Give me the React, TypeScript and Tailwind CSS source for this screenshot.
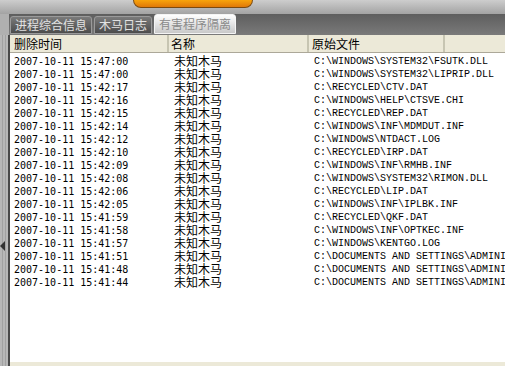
import React from "react";

const rows: [string, string][] = [
  ["2007-10-11 15:47:00", "C:\\WINDOWS\\SYSTEM32\\FSUTK.DLL"],
  ["2007-10-11 15:47:00", "C:\\WINDOWS\\SYSTEM32\\LIPRIP.DLL"],
  ["2007-10-11 15:42:17", "C:\\RECYCLED\\CTV.DAT"],
  ["2007-10-11 15:42:16", "C:\\WINDOWS\\HELP\\CTSVE.CHI"],
  ["2007-10-11 15:42:15", "C:\\RECYCLED\\REP.DAT"],
  ["2007-10-11 15:42:14", "C:\\WINDOWS\\INF\\MDMDUT.INF"],
  ["2007-10-11 15:42:12", "C:\\WINDOWS\\NTDACT.LOG"],
  ["2007-10-11 15:42:10", "C:\\RECYCLED\\IRP.DAT"],
  ["2007-10-11 15:42:09", "C:\\WINDOWS\\INF\\RMHB.INF"],
  ["2007-10-11 15:42:08", "C:\\WINDOWS\\SYSTEM32\\RIMON.DLL"],
  ["2007-10-11 15:42:06", "C:\\RECYCLED\\LIP.DAT"],
  ["2007-10-11 15:42:05", "C:\\WINDOWS\\INF\\IPLBK.INF"],
  ["2007-10-11 15:41:59", "C:\\RECYCLED\\QKF.DAT"],
  ["2007-10-11 15:41:58", "C:\\WINDOWS\\INF\\OPTKEC.INF"],
  ["2007-10-11 15:41:57", "C:\\WINDOWS\\KENTGO.LOG"],
  ["2007-10-11 15:41:51", "C:\\DOCUMENTS AND SETTINGS\\ADMINI"],
  ["2007-10-11 15:41:48", "C:\\DOCUMENTS AND SETTINGS\\ADMINI"],
  ["2007-10-11 15:41:44", "C:\\DOCUMENTS AND SETTINGS\\ADMINI"],
];

const cjk = "[font-family:'Noto_Sans_CJK_SC',sans-serif]";
const mono = "[font-family:'Liberation_Mono',monospace]";
const dateFont = "[font-family:'DejaVu_Sans_Mono',monospace]";

function Tab({ label, active }: { label: string; active?: boolean }) {
  if (active) {
    return (
      <div className={`h-[20px] mt-[-1px] px-[4px] rounded-t-[3px] border border-[#f4f4f4] bg-gradient-to-b from-[#ffffff] to-[#c9c9c9] text-[#8a8a8a] text-[12px] leading-[18px] ${cjk}`}>
        {label}
      </div>
    );
  }
  return (
    <div className={`h-[18px] mt-[1px] px-[4px] rounded-t-[3px] border border-[#9a9a9a] bg-gradient-to-b from-[#7a7a7a] to-[#4c4c4c] text-[#e2e2e2] text-[12px] leading-[16px] ${cjk}`}>
      {label}
    </div>
  );
}

export default function App() {
  return (
    <div className="w-[505px] h-[366px] overflow-hidden flex flex-col bg-[#a9a9a9]">
      <div className="h-[14px] shrink-0 bg-gradient-to-b from-[#cdcdcd] to-[#a3a3a3]">
        <div className="ml-[133px] w-[120px] h-[8px] rounded-b-[9px] bg-[#7a4a10] p-[1px] pt-0">
          <div className="h-full rounded-b-[8px] bg-gradient-to-b from-[#f8a40c] to-[#e07808]" />
        </div>
      </div>
      <div className="h-[21px] shrink-0 flex">
        <div className="w-[9px] bg-[#b0b0b0]" />
        <div className="flex-1 flex items-start gap-[2px] pl-[1px] pt-[1px] bg-gradient-to-b from-[#5e5e5e] to-[#7a7a7a]">
          <Tab label="进程综合信息" />
          <Tab label="木马日志" />
          <Tab label="有害程序隔离" active />
        </div>
      </div>
      <div className="flex-1 flex min-h-0">
        <div className="w-[8px] shrink-0 relative bg-[repeating-linear-gradient(90deg,#b8b8b8_0px,#b8b8b8_2px,#a2a2a2_2px,#a2a2a2_3px)]">
          <div className="absolute left-0 top-[206px] w-0 h-0 border-y-[5px] border-y-transparent border-r-[5px] border-r-[#333]" />
        </div>
        <div className="w-[2px] shrink-0 bg-[#4a4a4a]" />
        <div className="flex-1 flex flex-col bg-white border-b-[4px] border-[#ece9d8] min-w-0">
          <div className={`h-[18px] shrink-0 flex bg-[#ece9d8] border-b border-[#aca899] text-[12px] text-black leading-[17px] ${cjk}`}>
            <div className="w-[159px] pl-[4px] border-r-[2px] border-r-[#c7c5b2]">删除时间</div>
            <div className="w-[140px] pl-[2px] border-r-[2px] border-r-[#c7c5b2]">名称</div>
            <div className="w-[136px] pl-[3px] border-r-[2px] border-r-[#c7c5b2]">原始文件</div>
            <div className="flex-1" />
          </div>
          <div className="pt-[2px] flex flex-col">
            {rows.map(([time, path], i) => (
              <div key={i} className="h-[13px] flex text-black whitespace-nowrap">
                <div className={`w-[161px] pl-[4px] text-[10px] leading-[13px] ${dateFont}`}>{time}</div>
                <div className={`w-[140px] h-[13px] pl-[3px] text-[12px] leading-[12px] ${cjk}`}>未知木马</div>
                <div className={`flex-1 min-w-0 overflow-hidden pl-[3px] text-[10px] leading-[13px] ${mono}`}>{path}</div>
              </div>
            ))}
          </div>
        </div>
      </div>
    </div>
  );
}
